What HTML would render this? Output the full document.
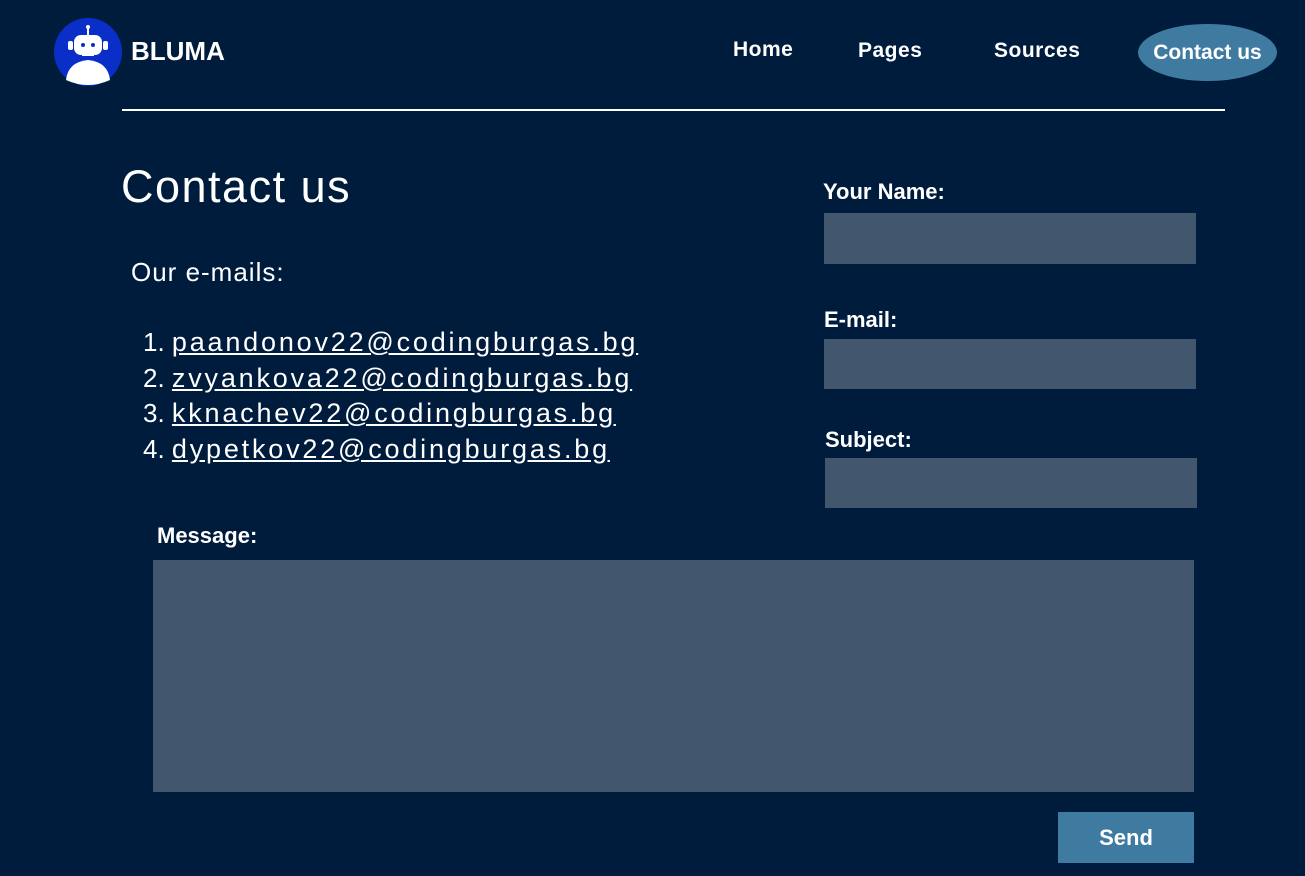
<!DOCTYPE html>
<html><head><style>
body{margin:0;width:1305px;height:876px;background:#001c3d;font-family:"Liberation Sans",sans-serif;color:#fff;position:relative;overflow:hidden}
.a{position:absolute}
.nav{font-weight:bold;font-size:21px}
.lbl{font-weight:bold;font-size:22px}
.box{background:#42566e;position:absolute}
.em{font-size:27px;color:#fff;text-decoration:underline;letter-spacing:2.8px}
</style></head><body>
<svg class="a" style="left:54px;top:18px" width="68" height="68" viewBox="0 0 68 68">
<circle cx="34" cy="34" r="34" fill="#0a2ec8"/>
<line x1="34" y1="9" x2="34" y2="17" stroke="#fff" stroke-width="2"/><circle cx="34" cy="9" r="2" fill="#fff"/>
<rect x="20" y="17" width="28" height="20" rx="7" fill="#fff"/>
<rect x="14" y="23" width="5" height="9" rx="2" fill="#fff"/><rect x="49" y="23" width="5" height="9" rx="2" fill="#fff"/>
<circle cx="29" cy="27" r="2" fill="#0a2ec8"/><circle cx="39" cy="27" r="2" fill="#0a2ec8"/>
<rect x="28" y="34" width="12" height="4" fill="#fff"/>
<path d="M12 62 Q14 44 34 42 Q54 44 56 62 Q34 72 12 62Z" fill="#fff"/>
</svg>
<div class="a" style="left:131px;top:36px;font-size:26px;font-weight:bold">BLUMA</div>
<div class="a nav" style="left:733px;top:38px;letter-spacing:0.5px">Home</div>
<div class="a nav" style="left:858px;top:39px;letter-spacing:0.5px">Pages</div>
<div class="a nav" style="left:994px;top:39px;letter-spacing:0.5px">Sources</div>
<div class="a nav" style="left:1138px;top:24px;width:139px;height:57px;border-radius:50%;background:#3f7aa1;text-align:center;line-height:57px">Contact us</div>
<div class="a" style="left:122px;top:109px;width:1103px;height:2px;background:#fff"></div>
<div class="a" style="left:121px;top:161px;font-size:45px;letter-spacing:1.5px">Contact us</div>
<div class="a" style="left:131px;top:257px;font-size:26px;letter-spacing:1px">Our e-mails:</div>
<div class="a" style="left:143px;top:325px;line-height:35.5px;font-size:26px">
<div>1. <span class="em">paandonov22@codingburgas.bg</span></div>
<div>2. <span class="em">zvyankova22@codingburgas.bg</span></div>
<div>3. <span class="em">kknachev22@codingburgas.bg</span></div>
<div>4. <span class="em">dypetkov22@codingburgas.bg</span></div>
</div>
<div class="a lbl" style="left:823px;top:179px">Your Name:</div>
<div class="box" style="left:824px;top:213px;width:372px;height:51px"></div>
<div class="a lbl" style="left:824px;top:307px">E-mail:</div>
<div class="box" style="left:824px;top:339px;width:372px;height:50px"></div>
<div class="a lbl" style="left:825px;top:427px">Subject:</div>
<div class="box" style="left:825px;top:458px;width:372px;height:50px"></div>
<div class="a lbl" style="left:157px;top:523px">Message:</div>
<div class="box" style="left:153px;top:560px;width:1041px;height:232px"></div>
<div class="a" style="left:1058px;top:812px;width:136px;height:51px;background:#3f7aa1;text-align:center;line-height:51px;font-weight:bold;font-size:22px">Send</div>
</body></html>
